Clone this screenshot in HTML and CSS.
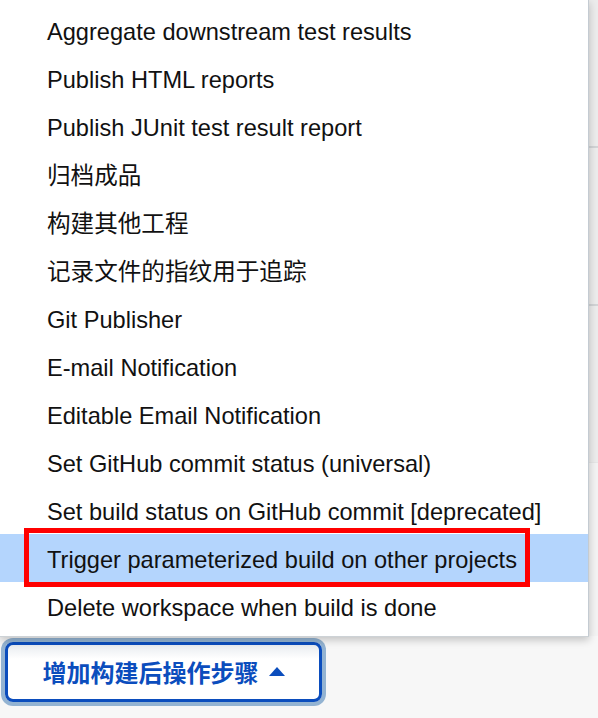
FILE: index.html
```html
<!DOCTYPE html>
<html lang="zh">
<head>
<meta charset="utf-8">
<title>Post-build actions</title>
<link rel="stylesheet" href="styles.css">
</head>
<body>
<div class="page">
  <div class="backdrop">
    <div class="bg-block bg-a"></div>
    <div class="bg-block bg-b"></div>
    <div class="bg-block bg-c"></div>
    <div class="bg-rest"></div>
  </div>
  <ul class="menu">
    <li class="item">Aggregate downstream test results</li>
    <li class="item">Publish HTML reports</li>
    <li class="item">Publish JUnit test result report</li>
    <li class="item">归档成品</li>
    <li class="item">构建其他工程</li>
    <li class="item">记录文件的指纹用于追踪</li>
    <li class="item">Git Publisher</li>
    <li class="item">E-mail Notification</li>
    <li class="item">Editable Email Notification</li>
    <li class="item">Set GitHub commit status (universal)</li>
    <li class="item">Set build status on GitHub commit [deprecated]</li>
    <li class="item item-active">Trigger parameterized build on other projects<span class="mark"></span></li>
    <li class="item">Delete workspace when build is done</li>
  </ul>
  <div class="actions">
    <button class="add-btn" type="button">增加构建后操作步骤<span class="caret"></span></button>
  </div>
</div>
</body>
</html>
```

FILE: styles.css
```css
html, body {
  margin: 0;
  padding: 0;
}
body {
  background: #f7f7f7;
  font-family: "Liberation Sans", Arial, "Noto Sans CJK SC", sans-serif;
  width: 598px;
  height: 718px;
  overflow: hidden;
}
.page {
  position: relative;
}
.backdrop {
  display: flex;
  flex-direction: column;
  height: 636px;
}
.bg-block {
  background: #ececec;
  border-bottom: 2px solid #d2d4d6;
}
.bg-a { height: 146px; }
.bg-b { height: 156px; }
.bg-c { height: 156px; border-bottom: 1px solid #e6e6e6; }
.bg-rest {
  flex: 1;
  background: #f3f3f3;
}
.menu {
  position: absolute;
  left: 0;
  top: 0;
  width: 589px;
  margin: 0;
  padding: 6px 0;
  list-style: none;
  background: #fff;
  border-right: 1px solid #c4cbd2;
  border-bottom: 1px solid #cdd2d6;
  box-sizing: border-box;
  height: 637px;
  box-shadow: 0 3px 8px rgba(0, 0, 0, 0.22);
}
.item {
  position: relative;
  height: 44px;
  padding-top: 4px;
  line-height: 44px;
  padding-left: 47px;
  font-size: 23.6px;
  color: #111;
  white-space: nowrap;
}
.item-active {
  background: #b4d5fd;
}
.mark {
  position: absolute;
  left: 24px;
  top: -6px;
  width: 506px;
  height: 59px;
  border: 5px solid #ff0000;
  box-sizing: border-box;
}
.actions {
  padding: 6px 0 0 5px;
}
.add-btn {
  display: flex;
  align-items: center;
  justify-content: center;
  gap: 10px;
  width: 317px;
  height: 60px;
  box-sizing: border-box;
  border: 3px solid #0b4dbd;
  border-radius: 8px;
  background: linear-gradient(#e9ecf0 0, #ffffff 14px);
  box-shadow: 0 0 0 4px #93b3d2;
  color: #0b4dbd;
  font-family: "Noto Sans CJK SC", sans-serif;
  font-weight: 700;
  font-size: 24px;
  padding: 0 0 2px;
}
.caret {
  width: 0;
  height: 0;
  border-left: 8px solid transparent;
  border-right: 8px solid transparent;
  border-bottom: 9px solid #0b4dbd;
  margin-top: 1px;
}
```
